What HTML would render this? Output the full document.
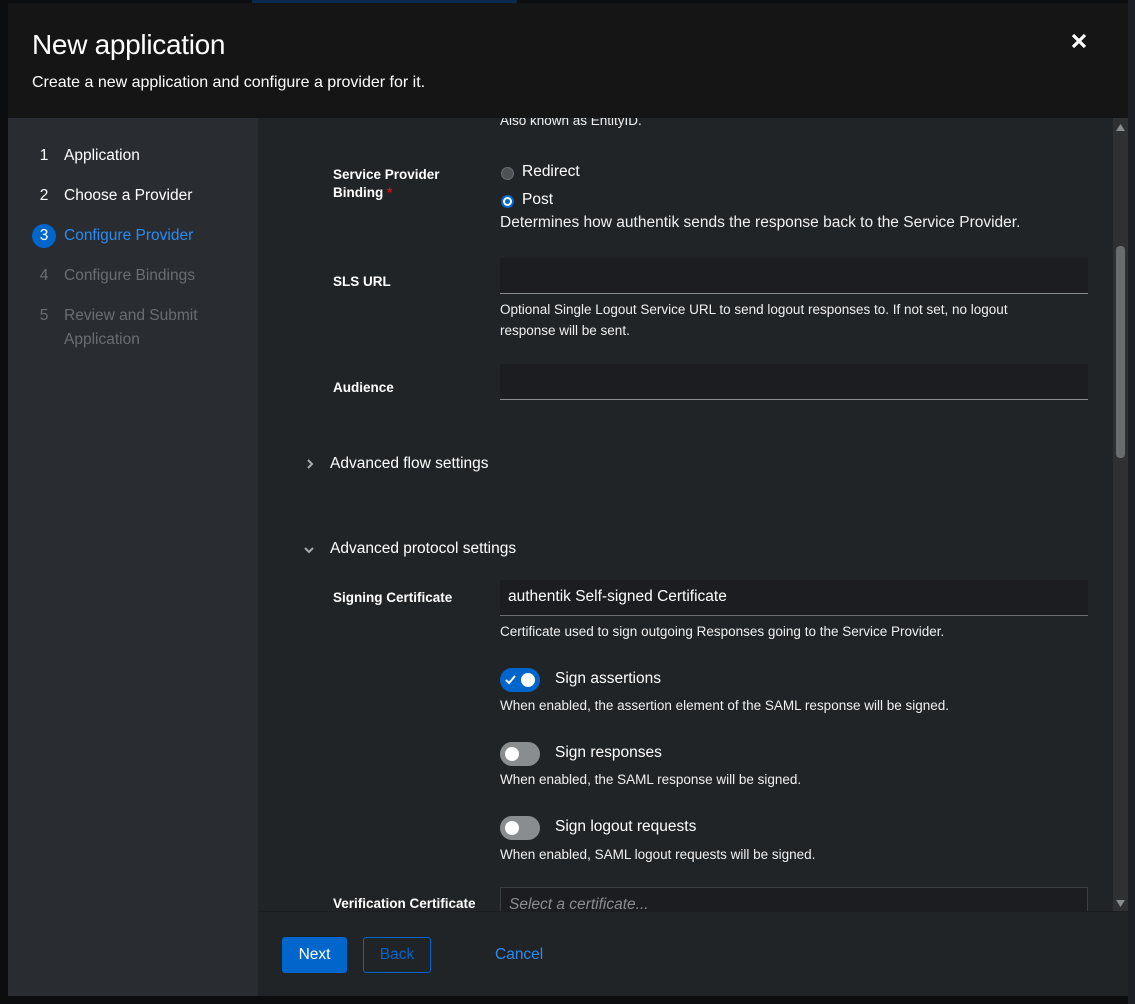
<!DOCTYPE html>
<html><head><meta charset="utf-8"><style>
*{box-sizing:border-box;margin:0;padding:0}
html,body{width:1135px;height:1004px;overflow:hidden;background:#0c0d0e;font-family:"Liberation Sans",sans-serif;color:#fff}
.abs{position:absolute}
#modal{position:absolute;left:8px;top:3px;width:1120px;height:993px;background:#151515}
#hdr h1{position:absolute;left:24px;top:26px;font-size:28px;font-weight:normal;letter-spacing:-0.3px}
#hdr p{position:absolute;left:24px;top:71px;font-size:16px}
#close{position:absolute;left:1063px;top:30px}
#side{position:absolute;left:0;top:115px;width:250px;height:878px;background:#292c31}
.st{position:absolute;left:24px;font-size:15.5px;line-height:24px}
.st .n{display:inline-block;width:24px;text-align:center;margin-right:8px}
#main{position:absolute;left:250px;top:115px;width:870px;height:793px;background:#212427;overflow:hidden}
#foot{position:absolute;left:250px;top:908px;width:870px;height:85px;background:#212427;border-top:1px solid #1b1d20}
.lbl{position:absolute;left:75px;font-size:13.5px;font-weight:bold;line-height:18px}
.help{position:absolute;left:242px;font-size:13.5px;line-height:21px;color:#f0f0f0}
.inp{position:absolute;left:242px;width:588px;height:36px;background:#1b1d21;border-bottom:1px solid #8a8d90}
.tog{position:absolute;left:242px;width:40px;height:24px;border-radius:12px;background:#8a8d90}
.tog::after{content:"";position:absolute;top:5px;width:14px;height:14px;border-radius:50%;background:#fff;left:5px}
.tog.on{background:#0066cc}
.tog.on::after{left:21px}
.tl{position:absolute;left:297px;font-size:15.5px}
</style></head><body>
<div class="abs" style="left:252px;top:0;width:265px;height:3px;background:#0a2a50"></div>
<div class="abs" style="left:437px;top:0;width:80px;height:3px;background:#0a2a50"></div>
<div class="abs" style="left:1128px;top:0;width:7px;height:1004px;background:#1c1f24"></div>
<div id="modal">
 <div id="hdr"><h1>New application</h1><p>Create a new application and configure a provider for it.</p>
  <svg id="close" width="16" height="16" viewBox="0 0 16 16"><path d="M2 2L14 14M14 2L2 14" stroke="#fff" stroke-width="3.2"/></svg></div>
 <div id="side">
  <div class="st" style="top:26px"><span class="n">1</span>Application</div>
  <div class="st" style="top:66px"><span class="n">2</span>Choose a Provider</div>
  <div class="st" style="top:106px;color:#2b8bf0"><span class="n" style="background:#0066cc;color:#fff;border-radius:50%;height:24px">3</span>Configure Provider</div>
  <div class="st" style="top:146px;color:#6a6e73"><span class="n">4</span>Configure Bindings</div>
  <div class="st" style="top:186px;color:#6a6e73"><span class="n">5</span>Review and Submit<br><span style="margin-left:32px">Application</span></div>
 </div>
 <div id="main">
  <div class="help" style="top:-8px">Also known as EntityID.</div>
  <div class="lbl" style="top:48px">Service Provider<br>Binding <span style="color:#c9190b">*</span></div>
  <div class="abs" style="left:243px;top:49px;width:13px;height:13px;border-radius:50%;background:#4f5255;border:1px solid #6a6e73"></div>
  <div class="abs" style="left:264px;top:45px;font-size:15.5px">Redirect</div>
  <div class="abs" style="left:243px;top:77px;width:13px;height:13px;border-radius:50%;background:#0066cc;padding:2px"><div style="width:9px;height:9px;border-radius:50%;background:#fff;padding:2px"><div style="width:5px;height:5px;border-radius:50%;background:#0066cc"></div></div></div>
  <div class="abs" style="left:264px;top:73px;font-size:15.5px">Post</div>
  <div class="help" style="top:94px;font-size:15.5px">Determines how authentik sends the response back to the Service Provider.</div>
  <div class="lbl" style="top:155px">SLS URL</div>
  <div class="inp" style="top:140px"></div>
  <div class="help" style="top:181px">Optional Single Logout Service URL to send logout responses to. If not set, no logout<br>response will be sent.</div>
  <div class="lbl" style="top:261px">Audience</div>
  <div class="inp" style="top:246px"></div>
  <svg class="abs" style="left:47px;top:340px" width="10" height="12" viewBox="0 0 10 12"><path d="M3 2L7 6L3 10" stroke="#aaa" stroke-width="2" fill="none"/></svg>
  <div class="abs" style="left:72px;top:337px;font-size:15.5px">Advanced flow settings</div>
  <svg class="abs" style="left:45px;top:427px" width="12" height="10" viewBox="0 0 12 10"><path d="M2 3L6 7L10 3" stroke="#aaa" stroke-width="2" fill="none"/></svg>
  <div class="abs" style="left:72px;top:422px;font-size:15.5px">Advanced protocol settings</div>
  <div class="lbl" style="top:471px">Signing Certificate</div>
  <div class="inp" style="top:462px;border-bottom-color:#6a6e73"><span style="position:absolute;left:8px;top:8px;font-size:15.5px">authentik Self-signed Certificate</span></div>
  <div class="help" style="top:503px">Certificate used to sign outgoing Responses going to the Service Provider.</div>
  <div class="tog on" style="top:550px"><svg style="position:absolute;left:5px;top:7px" width="11" height="10" viewBox="0 0 11 10"><path d="M1 5L4 8L10 1" stroke="#fff" stroke-width="2" fill="none"/></svg></div>
  <div class="tl" style="top:552px">Sign assertions</div>
  <div class="help" style="top:577px">When enabled, the assertion element of the SAML response will be signed.</div>
  <div class="tog" style="top:624px"></div>
  <div class="tl" style="top:626px">Sign responses</div>
  <div class="help" style="top:651px">When enabled, the SAML response will be signed.</div>
  <div class="tog" style="top:698px"></div>
  <div class="tl" style="top:700px">Sign logout requests</div>
  <div class="help" style="top:726px">When enabled, SAML logout requests will be signed.</div>
  <div class="lbl" style="top:777px">Verification Certificate</div>
  <div class="inp" style="top:769px;border:1px solid #3c3f42"><span style="position:absolute;left:8px;top:8px;font-size:15.5px;font-style:italic;color:#8a8d90">Select a certificate...</span></div>
  <div class="abs" style="left:855px;top:0;width:15px;height:793px;background:#2f3032"></div>
  <svg class="abs" style="left:858px;top:6px" width="9" height="7"><path d="M0 7L4.5 0L9 7Z" fill="#8a8d90"/></svg>
  <div class="abs" style="left:858px;top:128px;width:9px;height:212px;border-radius:4px;background:#6a6d70"></div>
  <svg class="abs" style="left:858px;top:782px" width="9" height="7"><path d="M0 0L4.5 7L9 0Z" fill="#8a8d90"/></svg>
 </div>
 <div id="foot">
  <div class="abs" style="left:24px;top:25px;width:65px;height:36px;background:#0066cc;border-radius:3px;font-size:15.5px;text-align:center;line-height:36px">Next</div>
  <div class="abs" style="left:105px;top:25px;width:68px;height:36px;border:1px solid #0066cc;border-radius:3px;font-size:15.5px;text-align:center;line-height:34px;color:#0066cc">Back</div>
  <div class="abs" style="left:237px;top:25px;font-size:15.5px;line-height:36px;color:#2b8bf0">Cancel</div>
 </div>
</div>
</body></html>
